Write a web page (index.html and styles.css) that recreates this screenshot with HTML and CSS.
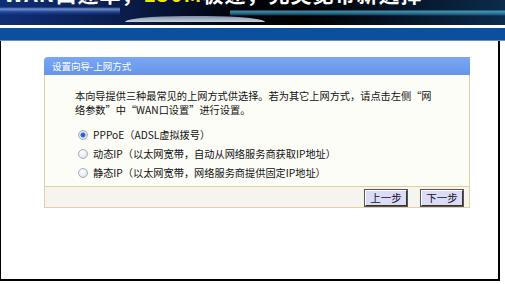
FILE: index.html
```html
<!DOCTYPE html>
<html lang="zh-CN">
<head>
    <meta charset="UTF-8">
    <title>设置向导-上网方式</title>
    <link rel="stylesheet" href="styles.css">
</head>
<body>
    <div class="banner">
        <div class="slogan">WAN口速率，<span class="hi">150M</span>极速，完美宽带新选择</div>
        <div class="hill"></div>
    </div>
    <div class="navbar"></div>

    <div class="frame">
        <div class="panel">
            <div class="panel-title">设置向导-上网方式</div>
            <div class="panel-body">
                <p class="intro">本向导提供三种最常见的上网方式供选择。若为其它上网方式，请点击左侧“网络参数”中“WAN口设置”进行设置。</p>
                <div class="choices">
                    <label class="choice"><input type="radio" name="wan" checked> PPPoE（ADSL虚拟拨号）</label>
                    <label class="choice"><input type="radio" name="wan"> 动态IP（以太网宽带，自动从网络服务商获取IP地址）</label>
                    <label class="choice"><input type="radio" name="wan"> 静态IP（以太网宽带，网络服务商提供固定IP地址）</label>
                </div>
            </div>
            <div class="panel-foot">
                <button class="button">上一步</button>
                <button class="button">下一步</button>
            </div>
        </div>
    </div>
</body>
</html>
```

FILE: styles.css
```css
body {
    margin: 0;
    background: #fff;
    font-family: "Noto Sans CJK SC", "DejaVu Sans", sans-serif;
    font-size: 10.2px;
    color: #111;
}
.banner {
    height: 25px;
    overflow: hidden;
    background:
        linear-gradient(180deg, rgba(0,0,0,0) 0, rgba(0,0,0,0) 10px, rgba(90,200,230,.7) 11px, rgba(60,150,200,.6) 14px, rgba(0,0,0,0) 16px) 230px 0 / 275px 25px no-repeat,
        linear-gradient(180deg, rgba(0,0,0,0) 0, rgba(0,0,0,0) 7px, rgba(140,170,230,.8) 9px, rgba(40,80,170,.7) 12px, rgba(0,0,0,0) 15px) 0 0 / 120px 25px no-repeat,
        linear-gradient(90deg, #0e2f78 0, #0a1c4a 25%, #02050e 45%, #000 60%, #061528 80%, #0b2c4c 100%);
}
.slogan {
    margin-top: -17px;
    padding-left: 4px;
    font-size: 21px;
    font-weight: bold;
    line-height: 20px;
    color: #fff;
    white-space: nowrap;
    letter-spacing: 1px;
}
.slogan .hi {
    color: #f2e600;
}
.hill {
    margin: 13px 0 0 125px;
    width: 140px;
    height: 6px;
    background: linear-gradient(180deg, #7b8ea8, #c8d2de);
    border-radius: 60px 60px 0 0 / 6px 6px 0 0;
}
.navbar {
    height: 12px;
    margin-top: 3px;
    background: #0b4f9f;
    border-bottom: 1px solid #6d8fbf;
}
.frame {
    height: 240px;
    width: 500px;
    border-left: 1px solid #000;
    border-right: 2px solid #000;
    border-bottom: 2px solid #000;
    padding-top: 16px;
    box-sizing: border-box;
}
.panel {
    margin-left: 43px;
    width: 426px;
}
.panel-title {
    height: 18px;
    line-height: 18px;
    padding-left: 8px;
    font-size: 9.5px;
    color: #fff;
    background: linear-gradient(180deg, #7aa7f2, #6595ea);
    border-radius: 4px 0 0 0;
}
.panel-body {
    background: #fdfdf8;
    border-left: 1px solid #e5cf9c;
    border-right: 1px solid #e5cf9c;
    padding: 14px 30px 4px 30px;
}
.intro {
    margin: 0;
    line-height: 14px;
}
.choices {
    display: flex;
    flex-direction: column;
    margin-top: 8px;
}
.choice {
    display: flex;
    align-items: center;
    height: 19px;
    padding-left: 3px;
}
.choice input {
    appearance: none;
    margin: 0 5px 0 0;
    width: 10px;
    height: 10px;
    border: 1px solid #9fb0c4;
    border-radius: 50%;
    background: radial-gradient(circle at 40% 35%, #fff 0, #e6e9ee 60%, #cfd5dd 100%);
}
.choice input:checked {
    background: radial-gradient(circle, #1e4fc4 0, #3a6ee0 2px, #e6e9ee 3px, #cfd5dd 100%);
}
.panel-foot {
    display: flex;
    justify-content: flex-end;
    gap: 14px;
    height: 22px;
    padding: 3px 6px 0 0;
    box-sizing: border-box;
    background: #f5f4ee;
    border: 1px solid #e5cf9c;
}
.button {
    width: 42px;
    height: 16px;
    padding: 0;
    font-family: inherit;
    font-size: 10.5px;
    line-height: 12px;
    color: #112;
    background: #dcdcf6;
    border: 1px solid;
    border-color: #fff #333 #333 #fff;
    outline: 1px solid #555;
}
```
